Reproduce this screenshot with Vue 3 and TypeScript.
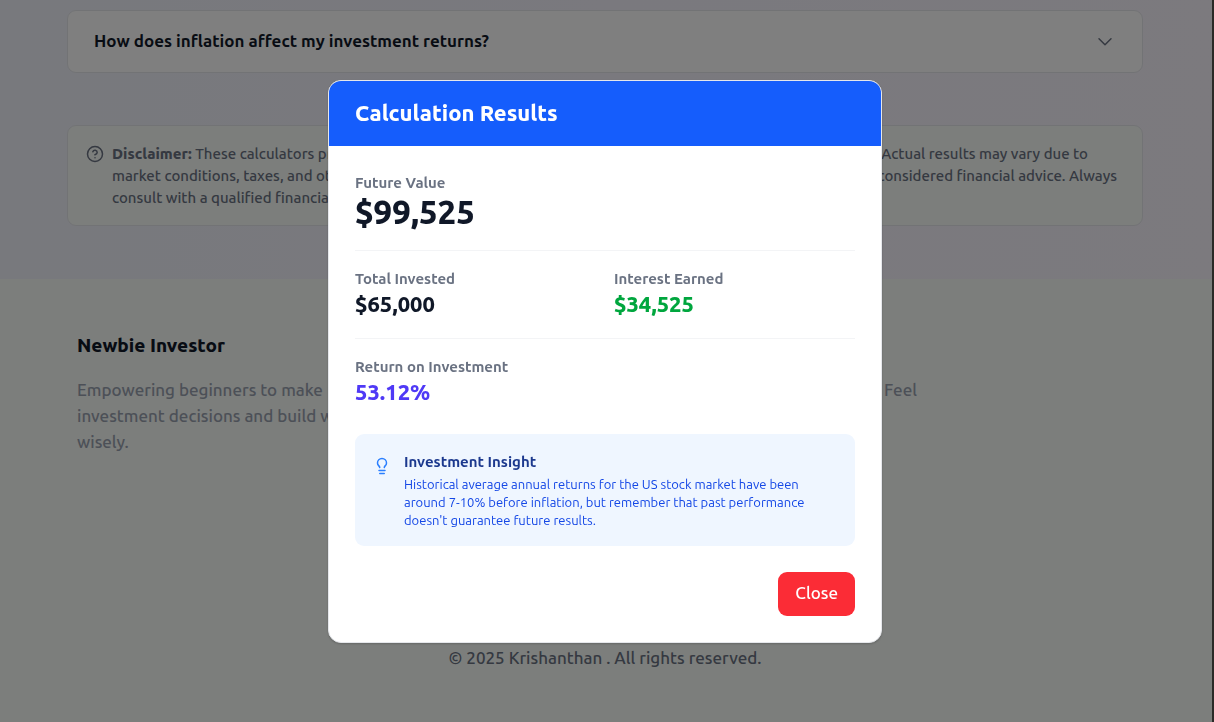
<script setup lang="ts">
import { ref } from 'vue'

const open = ref(true)

const result = {
  futureValue: '$99,525',
  invested: '$65,000',
  interest: '$34,525',
  roi: '53.12%',
}
</script>

<template>
  <div class="page">
    <main class="calculators">
      <button type="button" class="faq">
        <span>How does inflation affect my investment returns?</span>
        <svg class="chevron" viewBox="0 0 24 24" fill="none" stroke="currentColor" stroke-width="2" stroke-linecap="round" stroke-linejoin="round" aria-hidden="true">
          <path d="m4 9 8 8 8-8" />
        </svg>
      </button>

      <section class="disclaimer">
        <svg class="help" viewBox="0 0 24 24" fill="none" stroke="currentColor" stroke-width="2" stroke-linecap="round" stroke-linejoin="round" aria-hidden="true">
          <circle cx="12" cy="12" r="10" />
          <path d="M9.09 9a3 3 0 0 1 5.83 1c0 2-3 3-3 3" />
          <path d="M12 17h.01" />
        </svg>
        <p class="disclaimer-text">
          <span class="line first"><span><strong>Disclaimer:</strong> These calculators provide estimates only.</span><span>Actual results may vary due to</span></span>
          <span class="line"><span>market conditions, taxes, and other</span><span>factors, and should not be considered financial advice. Always</span></span>
          <span class="line"><span>consult with a qualified financial</span></span>
        </p>
      </section>
    </main>

    <footer class="footer">
      <div class="footer-columns">
        <div class="about">
          <h2>Newbie Investor</h2>
          <p>Empowering beginners to make<br>investment decisions and build wealth<br>wisely.</p>
        </div>
        <div class="contact">
          <p>Questions? Feel<br>free to ask.</p>
        </div>
      </div>
      <p class="copyright">© 2025 Krishanthan . All rights reserved.</p>
    </footer>

    <div v-if="open" class="overlay">
      <div class="modal" role="dialog" aria-modal="true" aria-labelledby="results-title">
        <header class="modal-header">
          <h2 id="results-title">Calculation Results</h2>
        </header>
        <div class="modal-body">
          <dl class="results">
            <div class="group">
              <dt>Future Value</dt>
              <dd class="total">{{ result.futureValue }}</dd>
            </div>
            <div class="group split">
              <div>
                <dt>Total Invested</dt>
                <dd>{{ result.invested }}</dd>
              </div>
              <div>
                <dt>Interest Earned</dt>
                <dd class="gain">{{ result.interest }}</dd>
              </div>
            </div>
            <div class="group">
              <dt>Return on Investment</dt>
              <dd class="roi">{{ result.roi }}</dd>
            </div>
          </dl>

          <aside class="insight">
            <svg class="bulb" viewBox="0 0 24 24" fill="none" stroke="currentColor" stroke-width="2" stroke-linecap="round" stroke-linejoin="round" aria-hidden="true">
              <path d="M15 14c.2-1 .7-1.7 1.5-2.5 1-.9 1.5-2.2 1.5-3.5A6 6 0 0 0 6 8c0 1 .2 2.2 1.5 3.5.7.7 1.3 1.5 1.5 2.5" />
              <path d="M8 18h8" />
              <path d="M9 22h6" />
            </svg>
            <div>
              <h3>Investment Insight</h3>
              <p>Historical average annual returns for the US stock market have been around 7-10% before inflation, but remember that past performance doesn't guarantee future results.</p>
            </div>
          </aside>

          <div class="actions">
            <button type="button" class="close" @click="open = false">Close</button>
          </div>
        </div>
      </div>
    </div>
  </div>
</template>

<style>
body {
  margin: 0;
  background: #f8fcf9;
}
</style>

<style scoped>
* {
  box-sizing: border-box;
}

h2,
h3,
p,
dl,
dd {
  margin: 0;
}

button {
  font: inherit;
  cursor: pointer;
}

strong {
  font-weight: 800;
}

.page {
  min-height: 100vh;
  font-family: Ubuntu, "Noto Sans", "Open Sans", sans-serif;
  font-size: 17px;
  font-weight: 500;
  line-height: 26px;
  color: #101828;
}

.calculators {
  display: flex;
  flex-direction: column;
  align-items: center;
  gap: 52px;
  padding: 10px 71px 53px 67px;
  background: linear-gradient(90deg, #f0f2fb, #f8f4fd);
}

.faq {
  display: flex;
  align-items: center;
  justify-content: space-between;
  width: 100%;
  max-width: 1076px;
  padding: 17px 28px 18px 26px;
  border: 1px solid #e5e7eb;
  border-radius: 9px;
  background: #ffffff;
  color: #101828;
  font-weight: 600;
  text-align: left;
}

.chevron {
  width: 18px;
  height: 18px;
  color: #6a7282;
}

.disclaimer {
  display: flex;
  gap: 8px;
  width: 100%;
  max-width: 1076px;
  padding: 17px 25px 16px 18px;
  border: 1px solid #e5e7eb;
  border-radius: 9px;
  background: #f8fcf9;
  color: #6a7282;
}

.help {
  flex: none;
  width: 18px;
  height: 18px;
  margin-top: 2px;
}

.disclaimer-text {
  flex: 1;
  font-size: 15px;
  line-height: 22px;
}

.line {
  display: flex;
  justify-content: space-between;
}

.line.first {
  padding-right: 29px;
}

.footer {
  padding: 52px 80px 52px 76px;
}

.footer-columns {
  display: flex;
  justify-content: space-between;
  max-width: 1056px;
  min-height: 260px;
  margin: 0 auto;
  color: #99a1af;
}

.about h2 {
  margin-bottom: 18px;
  color: #101828;
  font-size: 19px;
  font-weight: 800;
  line-height: 28px;
}

.contact {
  padding-top: 46px;
  padding-right: 216px;
}

.copyright {
  padding-top: 54px;
  color: #6a7282;
  text-align: center;
}

.overlay {
  position: fixed;
  inset: 0;
  display: flex;
  align-items: center;
  justify-content: center;
  padding-right: 2px;
  border-right: 2px solid #2b2a27;
  background: rgba(0, 0, 0, 0.5);
}

.modal {
  width: 100%;
  max-width: 554px;
  overflow: hidden;
  border: 1px solid #e5e7eb;
  border-radius: 13px;
  background: #ffffff;
  box-shadow: 0 1px 3px rgba(0, 0, 0, 0.1), 0 1px 2px rgba(0, 0, 0, 0.1);
}

.modal-header {
  padding: 17px 26px 18px;
  background: #155dfc;
  color: #ffffff;
}

.modal-header h2 {
  font-size: 22px;
  font-weight: 800;
  line-height: 30px;
}

.modal-body {
  padding: 26px;
}

.group {
  padding-bottom: 20px;
  margin-bottom: 17px;
  border-bottom: 1px solid #f3f4f6;
}

.group:last-child {
  padding-bottom: 0;
  margin-bottom: 28px;
  border-bottom: 0;
}

.split {
  display: grid;
  grid-template-columns: 1fr 1fr;
  gap: 18px;
}

dt {
  color: #6a7282;
  font-size: 15px;
  font-weight: 600;
  line-height: 22px;
}

dd {
  font-size: 22px;
  font-weight: 800;
  line-height: 28px;
}

.total {
  font-size: 33px;
  line-height: 36px;
}

.gain {
  color: #00a63e;
}

.roi {
  color: #4f39f6;
}

.insight {
  display: flex;
  gap: 13px;
  padding: 17px 18px;
  border-radius: 9px;
  background: #eff6ff;
}

.bulb {
  flex: none;
  width: 18px;
  height: 22px;
  margin-top: 4px;
  color: #2b7fff;
}

.insight h3 {
  margin-bottom: 2px;
  color: #1c398e;
  font-size: 15px;
  font-weight: 600;
  line-height: 22px;
}

.insight p {
  color: #1447e6;
  font-size: 13px;
  font-weight: 400;
  line-height: 18px;
}

.actions {
  display: flex;
  justify-content: flex-end;
  padding-top: 26px;
}

.close {
  padding: 8px 17px 10px;
  border: 0;
  border-radius: 9px;
  background: #fb2c36;
  color: #ffffff;
}
</style>
